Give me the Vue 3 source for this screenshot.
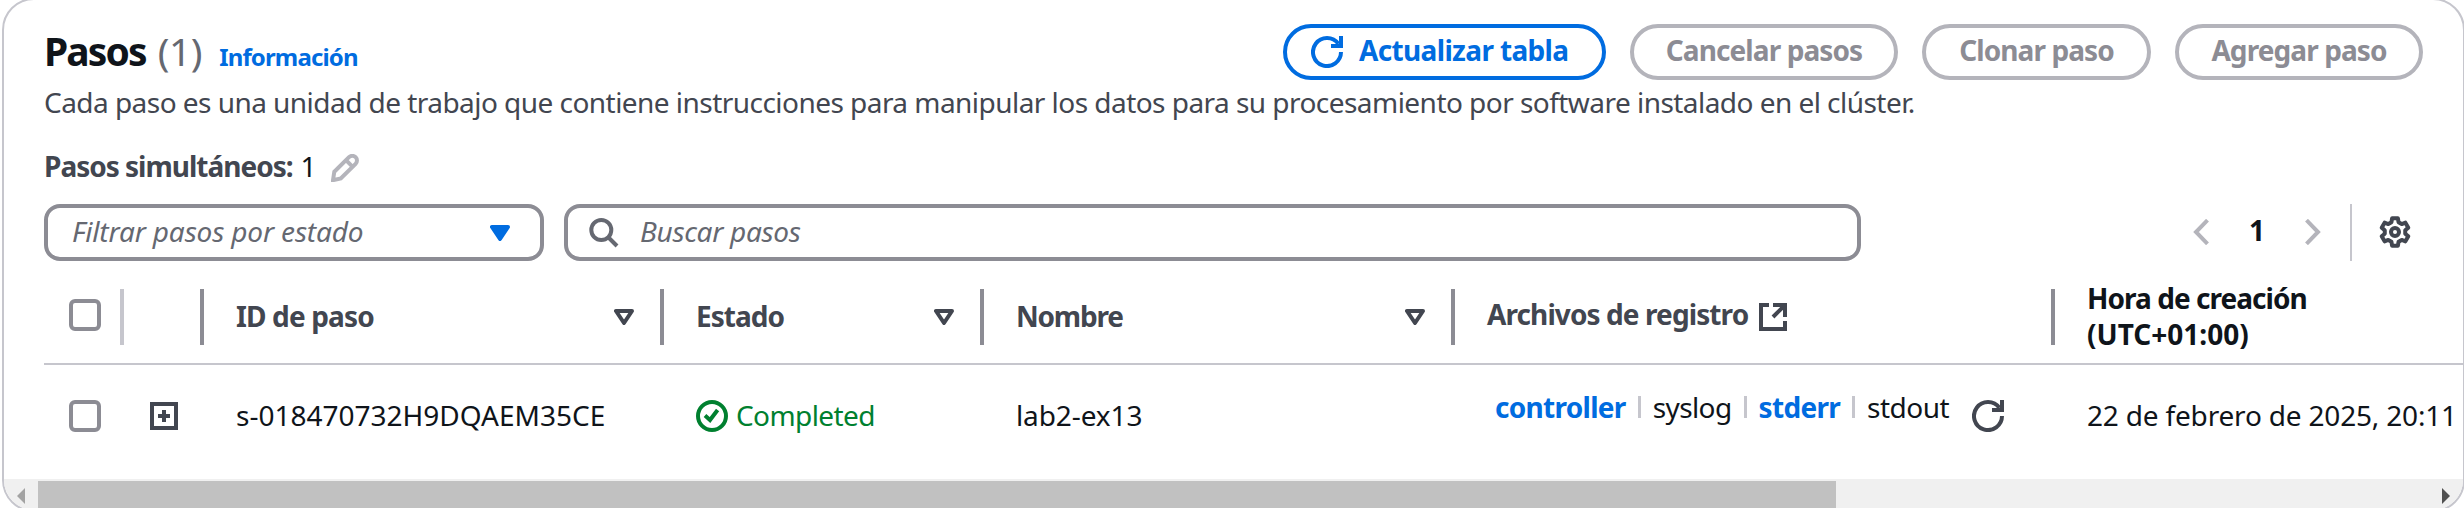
<script setup>
const columns = [
  { key: 'id', label: 'ID de paso' },
  { key: 'status', label: 'Estado' },
  { key: 'name', label: 'Nombre' },
]

const actions = [
  { key: 'cancel', label: 'Cancelar pasos' },
  { key: 'clone', label: 'Clonar paso' },
  { key: 'add', label: 'Agregar paso' },
]

const logs = [
  { name: 'controller', link: true },
  { name: 'syslog', link: false },
  { name: 'stderr', link: true },
  { name: 'stdout', link: false },
]

// Outline of a six-toothed cog centred in a 32px box
const gear = (() => {
  const pts = []
  for (let k = 0; k < 6; k++) {
    const mid = -90 + k * 60
    for (const [offset, r] of [[-20, 10.4], [-12, 14], [12, 14], [20, 10.4]]) {
      const a = ((mid + offset) * Math.PI) / 180
      pts.push(`${(16 + r * Math.cos(a)).toFixed(2)} ${(16 + r * Math.sin(a)).toFixed(2)}`)
    }
  }
  return `M${pts.join('L')}Z`
})()
</script>

<template>
  <div class="viewport">
    <section class="panel">
      <header class="header">
        <div class="title">
          <h2>Pasos</h2>
          <span class="count">(1)</span>
          <a class="info">Información</a>
        </div>
        <div class="actions">
          <button class="btn primary">
            <svg class="i32" viewBox="0 0 32 32"><path d="M30 16a14 14 0 1 1-2.6-8.1M20 10h10V0" /></svg>
            <span>Actualizar tabla</span>
          </button>
          <button v-for="a in actions" :key="a.key" class="btn" :class="a.key" disabled>
            <span>{{ a.label }}</span>
          </button>
        </div>
      </header>

      <p class="description">Cada paso es una unidad de trabajo que contiene instrucciones para manipular los datos para su procesamiento por software instalado en el clúster.</p>

      <div class="concurrency">
        <strong>Pasos simultáneos:</strong>
        <span class="value">1</span>
        <svg class="pencil" viewBox="0 0 28 28"><path d="M2 26.2l1.3-8.4L18 3.2a4.6 4.6 0 0 1 6.6 6.6L9.8 24.4zM15 6.2l6.4 6.4" /></svg>
      </div>

      <div class="filters">
        <div class="field select">
          <span>Filtrar pasos por estado</span>
          <svg class="tri solid" viewBox="0 0 20 16"><path d="M2 2h16l-8 12z" /></svg>
        </div>
        <div class="field search">
          <svg class="lens" viewBox="0 0 30 30"><circle cx="12.3" cy="12" r="10" /><path d="M19.5 19.5l8.5 8.5" /></svg>
          <span>Buscar pasos</span>
        </div>
        <nav class="pager">
          <svg class="chev" viewBox="0 0 16 26"><path d="M14.5 1.2L3 13l11.5 11.8" /></svg>
          <b>1</b>
          <svg class="chev" viewBox="0 0 16 26"><path d="M1.5 1.2L13 13 1.5 24.8" /></svg>
        </nav>
        <div class="settings">
          <svg class="i32" viewBox="0 0 32 32"><path :d="gear" /><circle cx="16" cy="16" r="4" /></svg>
        </div>
      </div>

      <div class="row head">
        <div class="cell pick light"><i class="box"></i></div>
        <div class="cell"></div>
        <div v-for="c in columns" :key="c.key" class="cell text sortable" :class="'h-' + c.key">
          <span>{{ c.label }}</span>
          <svg class="tri" viewBox="0 0 20 16"><path d="M2 2h16l-8 12z" /></svg>
        </div>
        <div class="cell text files">
          <span>Archivos de registro</span>
          <svg class="ext" viewBox="0 0 28 28"><path d="M10 2H2v24h24v-8M14 2h12v12M26 2L14 14" /></svg>
        </div>
        <div class="cell text created">
          <span>Hora de creación<br /><span class="zone">(UTC+01:00)</span></span>
        </div>
      </div>

      <div class="row body">
        <div class="cell pick"><i class="box"></i></div>
        <div class="cell expand">
          <svg class="plus" viewBox="0 0 28 28"><path d="M2 2h24v24H2zM14 8v12M8 14h12" /></svg>
        </div>
        <div class="cell text"><span>s-018470732H9DQAEM35CE</span></div>
        <div class="cell text status">
          <svg class="i32" viewBox="0 0 32 32"><circle cx="16" cy="16" r="14" /><path d="M9 15.6l5 4.4 7.6-10" /></svg>
          <span>Completed</span>
        </div>
        <div class="cell text name"><span>lab2-ex13</span></div>
        <div class="cell logs">
          <ul>
            <li v-for="l in logs" :key="l.name" :class="[l.name, { link: l.link }]">{{ l.name }}</li>
          </ul>
          <svg class="i32" viewBox="0 0 32 32"><path d="M30 16a14 14 0 1 1-2.6-8.1M20 10h10V0" /></svg>
        </div>
        <div class="cell text date"><span>22 de febrero de 2025, 20:11</span></div>
      </div>

      <div class="scrollbar">
        <svg class="arrow" viewBox="0 0 8 16"><path d="M8 0v16L0 8z" /></svg>
        <div class="thumb"></div>
        <svg class="arrow end" viewBox="0 0 8 16"><path d="M0 0v16l8-8z" /></svg>
      </div>
    </section>
  </div>
</template>

<style>
body {
  margin: 0;
  background: #fff;
}
</style>

<style scoped>
.viewport {
  width: 2464px;
  height: 508px;
  overflow: hidden;
  background: #fff;
  color: #0f141a;
  font: 400 28px/36px "Noto Sans", "Open Sans", sans-serif;
}
.viewport * {
  box-sizing: border-box;
}
.panel {
  width: 2463px;
  height: 514px;
  margin: -2px 0 0 2px;
  border: 2px solid #c6c6cd;
  border-radius: 32px;
  overflow: hidden;
  display: flex;
  flex-direction: column;
  white-space: nowrap;
}
.panel > * {
  flex: none;
}
svg {
  display: block;
  flex: none;
  fill: none;
  stroke: currentColor;
  stroke-width: 4;
}
.i32 {
  width: 32px;
  height: 32px;
}
.header {
  display: flex;
  justify-content: space-between;
  height: 80px;
  padding: 24px 40px 0;
}
.title {
  display: flex;
  align-items: baseline;
}
h2 {
  margin: 0;
  font-size: 39px;
  line-height: 54px;
  font-weight: 700;
  letter-spacing: -1.9px;
}
.count {
  margin-left: 12px;
  font-size: 39px;
  line-height: 54px;
  letter-spacing: -0.4px;
  color: #656871;
}
.info {
  margin-left: 17px;
  font-size: 24px;
  line-height: 30px;
  font-weight: 700;
  letter-spacing: -0.85px;
  color: #006ce0;
}
.actions {
  display: flex;
  gap: 24px;
}
.btn {
  display: flex;
  align-items: center;
  justify-content: center;
  height: 56px;
  padding: 0;
  border: 4px solid #b4b4bb;
  border-radius: 28px;
  background: #fff;
  color: #8c8c94;
  font: inherit;
  font-weight: 700;
  letter-spacing: -0.9px;
}
.btn span {
  margin-top: -4px;
}
.primary {
  width: 323px;
  justify-content: flex-start;
  padding-left: 24px;
  gap: 16px;
  color: #006ce0;
  border-color: #006ce0;
  letter-spacing: -0.65px;
}
.cancel { width: 268px; }
.clone { width: 229px; }
.add { width: 248px; }
.description {
  margin: 2px 0 0 40px;
  line-height: 40px;
  letter-spacing: -0.54px;
  color: #424650;
}
.concurrency {
  display: flex;
  align-items: center;
  margin: 24px 0 0 40px;
  height: 40px;
}
.concurrency strong {
  font-weight: 700;
  letter-spacing: -1px;
  color: #424650;
}
.value {
  margin-left: 8px;
}
.pencil {
  width: 28px;
  height: 28px;
  margin: 3px 0 0 14px;
  color: #b4b4bb;
}
.filters {
  display: flex;
  height: 57px;
  margin: 18px 40px 0;
}
.field {
  display: flex;
  align-items: center;
  border: 4px solid #8c8c94;
  border-radius: 16px;
  color: #656871;
  font-style: italic;
}
.field span {
  margin-top: -4px;
}
.select {
  width: 500px;
  padding: 0 30px 0 24px;
  justify-content: space-between;
  letter-spacing: -0.15px;
}
.search {
  width: 1297px;
  margin-left: 20px;
  padding-left: 21px;
  gap: 21px;
  letter-spacing: -0.3px;
}
.search span {
  margin-top: -3px;
}
.lens {
  width: 30px;
  height: 30px;
}
.tri {
  width: 20px;
  height: 16px;
  stroke-linejoin: round;
}
.solid {
  color: #006ce0;
  fill: currentColor;
}
.pager {
  display: flex;
  align-items: center;
  margin-left: auto;
  padding-bottom: 1px;
}
.pager b {
  width: 96px;
  margin-top: -4px;
  text-align: center;
  font-weight: 700;
}
.chev {
  width: 16px;
  height: 26px;
  color: #b4b4bb;
}
.settings {
  display: flex;
  align-items: center;
  margin-left: 29px;
  padding: 0 12px 1px 27px;
  border-left: 2px solid #c6c6cd;
  color: #424650;
}
.settings svg {
  stroke-linejoin: round;
}
.row {
  display: grid;
  grid-template-columns: 80px 80px 460px 320px 471px 600px 460px;
  margin-left: 40px;
}
.head {
  height: 94px;
  margin-top: 10px;
  border-bottom: 2px solid #c6c6cd;
  color: #424650;
  font-weight: 700;
}
.body {
  height: 114px;
  padding-bottom: 12px;
}
.cell {
  display: flex;
  align-items: center;
}
.head .cell::after {
  content: "";
  width: 4px;
  height: 56px;
  margin-left: auto;
  background: #8c8c94;
}
.head .light::after {
  background: #c6c6cd;
}
.head .created::after {
  content: none;
}
.text {
  padding-left: 32px;
}
.text > span {
  margin-top: -3px;
}
.sortable > .tri {
  margin-left: auto;
}
.head .sortable::after {
  margin-left: 26px;
}
.pick {
  padding-left: 25px;
}
.box {
  width: 32px;
  height: 32px;
  border: 4px solid #8c8c94;
  border-radius: 6px;
}
.head .box {
  margin-top: -4px;
}
.h-id { letter-spacing: -0.85px; }
.h-status { letter-spacing: -0.95px; }
.h-name { letter-spacing: -1.2px; }
.files {
  letter-spacing: -0.9px;
}
.files > span {
  margin-top: -7px;
}
.ext {
  width: 28px;
  height: 28px;
  margin-left: 11px;
}
.created {
  color: #0f141a;
  letter-spacing: -0.95px;
}
.created > span {
  margin-top: -3px;
}
.zone {
  letter-spacing: 0;
}
.expand {
  padding-left: 26px;
  color: #424650;
}
.plus {
  width: 28px;
  height: 28px;
}
.status {
  gap: 8px;
  color: #00802f;
  letter-spacing: -0.6px;
}
.logs {
  padding-left: 40px;
  color: #424650;
}
.logs ul {
  display: flex;
  align-items: center;
  margin: -19px 23px 0 0;
  padding: 0;
  list-style: none;
}
.logs li {
  display: flex;
  align-items: center;
  color: #0f141a;
}
.logs li + li::before {
  content: "";
  width: 3px;
  height: 22px;
  margin: 1px 12px 0;
  background: #c6c6cd;
}
.logs .link {
  font-weight: 700;
  letter-spacing: -0.7px;
  color: #006ce0;
}
.logs .syslog { letter-spacing: -0.6px; }
.logs .stdout { letter-spacing: -0.5px; }
.name { letter-spacing: -0.1px; }
.date { letter-spacing: -0.18px; }
.scrollbar {
  display: flex;
  align-items: flex-start;
  height: 33px;
  padding-top: 2px;
  background: #f0f0f0;
}
.arrow {
  width: 8px;
  height: 16px;
  margin: 7px 13px 0;
  fill: #a3a3a3;
  stroke: none;
}
.thumb {
  width: 1798px;
  height: 31px;
  background: #c1c1c1;
}
.end {
  margin-left: auto;
  fill: #505050;
}
</style>
